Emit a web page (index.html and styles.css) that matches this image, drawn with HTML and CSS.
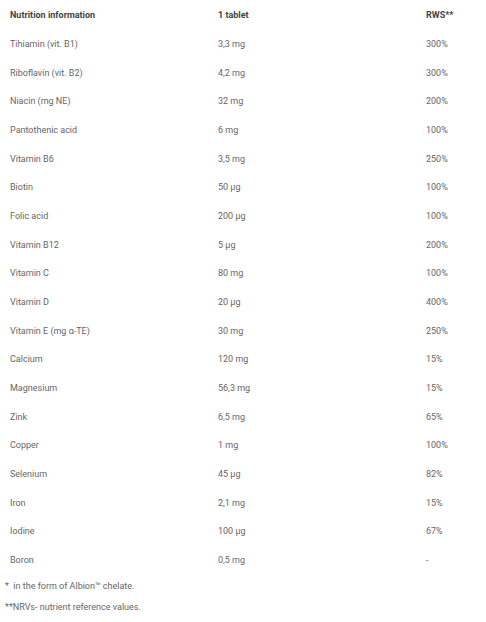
FILE: index.html
```html
<!DOCTYPE html>
<html>
<head>
<meta charset="utf-8">
<link rel="stylesheet" href="styles.css">
</head>
<body>
<div class="table">
  <div class="row head"><span>Nutrition information</span><span>1 tablet</span><span>RWS**</span></div>
  <div class="row"><span>Tihiamin (vit. B1)</span><span>3,3 mg</span><span>300%</span></div>
  <div class="row"><span>Riboflavin (vit. B2)</span><span>4,2 mg</span><span>300%</span></div>
  <div class="row"><span>Niacin (mg NE)</span><span>32 mg</span><span>200%</span></div>
  <div class="row"><span>Pantothenic acid</span><span>6 mg</span><span>100%</span></div>
  <div class="row"><span>Vitamin B6</span><span>3,5 mg</span><span>250%</span></div>
  <div class="row"><span>Biotin</span><span>50 µg</span><span>100%</span></div>
  <div class="row"><span>Folic acid</span><span>200 µg</span><span>100%</span></div>
  <div class="row"><span>Vitamin B12</span><span>5 µg</span><span>200%</span></div>
  <div class="row"><span>Vitamin C</span><span>80 mg</span><span>100%</span></div>
  <div class="row"><span>Vitamin D</span><span>20 µg</span><span>400%</span></div>
  <div class="row"><span>Vitamin E (mg α-TE)</span><span>30 mg</span><span>250%</span></div>
  <div class="row"><span>Calcium</span><span>120 mg</span><span>15%</span></div>
  <div class="row"><span>Magnesium</span><span>56,3 mg</span><span>15%</span></div>
  <div class="row"><span>Zink</span><span>6,5 mg</span><span>65%</span></div>
  <div class="row"><span>Copper</span><span>1 mg</span><span>100%</span></div>
  <div class="row"><span>Selenium</span><span>45 µg</span><span>82%</span></div>
  <div class="row"><span>Iron</span><span>2,1 mg</span><span>15%</span></div>
  <div class="row"><span>Iodine</span><span>100 µg</span><span>67%</span></div>
  <div class="row"><span>Boron</span><span>0,5 mg</span><span>-</span></div>
</div>
<div class="notes">
  <p class="note">*&nbsp; in the form of Albion™ chelate.</p>
  <p class="note">**NRVs- nutrient reference values.</p>
</div>
</body>
</html>
```
FILE: styles.css
```css
html, body {
  margin: 0;
  padding: 0;
  background: #fff;
}
body {
  font-family: Roboto, "Liberation Sans", sans-serif;
  font-size: 9px;
  color: #666;
  padding-top: 1px;
}
.table {
  display: grid;
  grid-auto-rows: 28.68px;
}
.row {
  display: grid;
  grid-template-columns: 208px 208px 1fr;
  align-items: center;
  padding-left: 10px;
}
.head {
  font-weight: bold;
  color: #444;
}
.notes {
  margin-top: 2px;
}
.note {
  margin: 0;
  padding-left: 5px;
  line-height: 21px;
}
```
